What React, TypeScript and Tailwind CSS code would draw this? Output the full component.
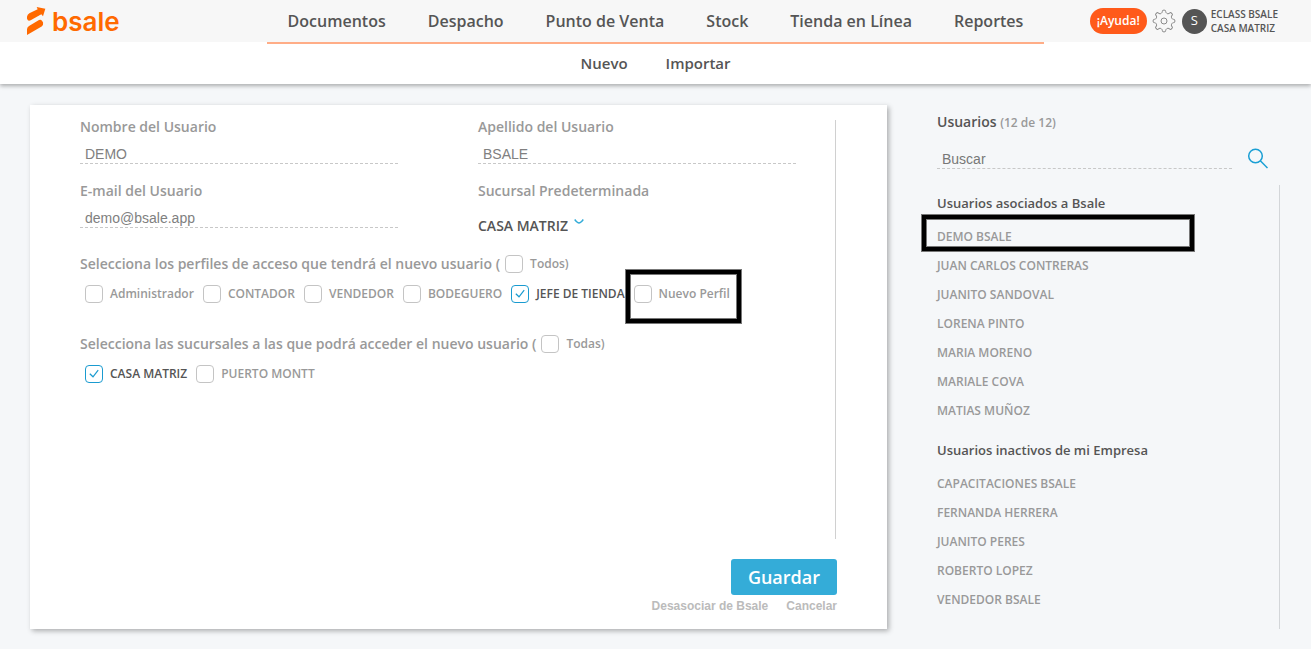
import { useId } from "react";

const menu = ["Documentos", "Despacho", "Punto de Venta", "Stock", "Tienda en Línea", "Reportes"];

const profiles = [
  { name: "Administrador" },
  { name: "CONTADOR" },
  { name: "VENDEDOR" },
  { name: "BODEGUERO" },
  { name: "JEFE DE TIENDA", checked: true },
  { name: "Nuevo Perfil", highlighted: true },
];

const branches = [{ name: "CASA MATRIZ", checked: true }, { name: "PUERTO MONTT" }];

const activeUsers = [
  "DEMO BSALE",
  "JUAN CARLOS CONTRERAS",
  "JUANITO SANDOVAL",
  "LORENA PINTO",
  "MARIA MORENO",
  "MARIALE COVA",
  "MATIAS MUÑOZ",
];

const inactiveUsers = [
  "CAPACITACIONES BSALE",
  "FERNANDA HERRERA",
  "JUANITO PERES",
  "ROBERTO LOPEZ",
  "VENDEDOR BSALE",
];

const Logo = () => (
  <a href="#" className="flex items-center gap-[6px] text-[#ff6900]">
    <svg width="20" height="30" viewBox="78 18 60 90" fill="currentColor" aria-hidden="true">
      <path d="M110 21 L136 26 L129 49 L124 43 L92 61 Q86 64 83 60 Q80 56 81 50 Q82 44 88 40 L113 28 Z" />
      <path d="M81 105 V88 Q81 82 87 78 L117 60 Q122 57 126 62 Q131 67 129 74 Q127 79 121 82 Z" />
    </svg>
    <span className="pt-px font-['Inter',sans-serif] text-[26px] leading-[30px] font-semibold">bsale</span>
  </a>
);

const GearIcon = () => (
  <svg width="24" height="24" viewBox="0 0 24 24" fill="none" stroke="#8a8a8a" aria-hidden="true">
    {[0, 45, 90, 135, 180, 225, 270, 315].map((angle) => (
      <path
        key={angle}
        transform={`rotate(${angle} 12 12)`}
        d="M8.86 4.42 C9.9 4 10.2 3.4 10.3 2.6 Q10.4 1.2 11 1.2 H13 Q13.6 1.2 13.7 2.6 C13.8 3.4 14.1 4 15.14 4.42"
      />
    ))}
    <circle cx="12" cy="12" r="3" />
  </svg>
);

const Header = () => (
  <header className="relative z-10 bg-white shadow-[0_2px_4px_rgba(0,0,0,0.3)]">
    <div className="grid h-[42px] grid-cols-[1fr_auto_1fr] bg-[#f7f7f7]">
      <div className="flex items-center pl-[26px]">
        <Logo />
      </div>
      <nav className="-mb-[2px] flex border-b-2 border-[#ffad87]">
        {menu.map((item) => (
          <a key={item} href="#" className="px-[21px] text-base leading-[42px]">
            {item}
          </a>
        ))}
      </nav>
      <div className="flex items-center justify-end pr-[33px]">
        <button type="button" className="h-[26px] rounded-full bg-[#ff5a1a] px-[7px] text-xs text-white">
          ¡Ayuda!
        </button>
        <button type="button" aria-label="Configuración" className="ml-[5px]">
          <GearIcon />
        </button>
        <span className="ml-[6px] flex size-[25px] items-center justify-center rounded-full bg-[#555] text-[13px] font-normal text-white">
          S
        </span>
        <div className="ml-1 text-[10px] leading-[14px]">
          <div>ECLASS BSALE</div>
          <div>CASA MATRIZ</div>
        </div>
      </div>
    </div>
    <nav className="flex justify-center gap-[38px] text-[15px] leading-[42px]">
      <a href="#">Nuevo</a>
      <a href="#">Importar</a>
    </nav>
  </header>
);

// thick black frame with a thin grey edge on both sides
const Frame = () => (
  <span className="block h-full border border-[#777]">
    <span className="block h-full border-4 border-black">
      <span className="block h-full border border-[#777]" />
    </span>
  </span>
);

type FieldProps = {
  label: string;
  value: string;
  type?: string;
};

const Field = ({ label, value, type = "text" }: FieldProps) => {
  const id = useId();
  return (
    <div>
      <label htmlFor={id} className="block text-sm leading-[14px] text-[#999]">
        {label}
      </label>
      <input
        id={id}
        type={type}
        defaultValue={value}
        className="mt-[10px] block h-5 w-full border-b border-dashed border-[#c8c8c8] px-[5px] font-['Liberation_Sans',Arial,sans-serif] text-sm font-normal text-[#808080] outline-none"
      />
    </div>
  );
};

type CheckProps = {
  name: string;
  checked?: boolean;
  highlighted?: boolean;
};

const Check = ({ name, checked, highlighted }: CheckProps) => (
  <label className="relative flex items-center gap-[7px] text-xs whitespace-nowrap text-[#999] has-checked:text-[#555]">
    <span className="relative flex size-[18px]">
      <input
        type="checkbox"
        defaultChecked={checked}
        className="peer size-[18px] appearance-none rounded-[4px] border border-[#c4c4c4] bg-white checked:border-[#1a9bd0]"
      />
      <svg
        viewBox="0 0 18 18"
        fill="none"
        stroke="#1a9bd0"
        strokeWidth="1.2"
        className="pointer-events-none absolute inset-0 hidden peer-checked:block"
        aria-hidden="true"
      >
        <path d="M4.8 8.8 L8 11.8 L13.2 5.2" />
      </svg>
    </span>
    {name}
    {highlighted && (
      <span className="pointer-events-none absolute -top-4 -right-3 -bottom-[21px] -left-[9px]">
        <Frame />
      </span>
    )}
  </label>
);

type CheckGroupProps = {
  title: string;
  all: string;
  options: CheckProps[];
};

const CheckGroup = ({ title, all, options }: CheckGroupProps) => {
  const id = useId();
  return (
    <div role="group" aria-labelledby={id}>
      <div className="flex h-[30px] items-center gap-[5px] text-sm text-[#999]">
        <span id={id}>{title} (</span>
        <Check name={all} />
      </div>
      <div className="flex h-[30px] items-center gap-[9px] pl-[5px]">
        {options.map((option) => (
          <Check key={option.name} {...option} />
        ))}
      </div>
    </div>
  );
};

const UserForm = () => (
  <form className="flex flex-1 flex-col bg-white px-[50px] pt-[15px] pb-[15px] shadow-[2px_2px_5px_rgba(0,0,0,0.3)]">
    <div className="mr-px flex-1 border-r border-[#d0d0d0]">
      <div className="grid grid-cols-2 gap-x-20 gap-y-5 pr-[39px]">
        <Field label="Nombre del Usuario" value="DEMO" />
        <Field label="Apellido del Usuario" value="BSALE" />
        <Field label="E-mail del Usuario" value="demo@bsale.app" type="email" />
        <div>
          <label htmlFor="sucursal" className="block text-sm leading-[14px] text-[#999]">
            Sucursal Predeterminada
          </label>
          <div className="mt-[18px] flex h-5 gap-[6px]">
            <select id="sucursal" className="field-sizing-content appearance-none text-sm leading-5 outline-none">
              <option>CASA MATRIZ</option>
              <option>PUERTO MONTT</option>
            </select>
            <svg width="10" height="12" viewBox="0 0 10 12" fill="none" stroke="#34acd8" strokeWidth="1.5" aria-hidden="true">
              <path d="M0.7 3.5 Q3.5 7 5 7 Q6.5 7 9.3 3.5" />
            </svg>
          </div>
        </div>
      </div>

      <div className="mt-[13px] flex flex-col gap-5">
        <CheckGroup
          title="Selecciona los perfiles de acceso que tendrá el nuevo usuario"
          all="Todos)"
          options={profiles}
        />
        <CheckGroup
          title="Selecciona las sucursales a las que podrá acceder el nuevo usuario"
          all="Todas)"
          options={branches}
        />
      </div>
    </div>

    <div className="mt-5 flex flex-col items-end">
      <button type="button" className="h-9 rounded-[3px] bg-[#34acd8] px-[17px] text-lg text-white">
        Guardar
      </button>
      <div className="mt-[3px] flex gap-[18px] font-['Liberation_Sans',Arial,sans-serif] text-xs leading-4 font-bold text-[#bbb]">
        <button type="button">Desasociar de Bsale</button>
        <button type="button">Cancelar</button>
      </div>
    </div>
  </form>
);

const UserList = ({ title, users, selected }: { title: string; users: string[]; selected?: string }) => (
  <section>
    <h3 className="text-[13px] leading-[37px]">{title}</h3>
    <ul className="text-xs text-[#999]">
      {users.map((user) => (
        <li key={user} className="relative h-[29px]">
          <button type="button" className="leading-[29px]">
            {user}
          </button>
          {user === selected && (
            <span className="pointer-events-none absolute -top-2 right-[84px] -bottom-px -left-4">
              <Frame />
            </span>
          )}
        </li>
      ))}
    </ul>
  </section>
);

const Sidebar = () => (
  <aside className="flex w-[343px] flex-col">
    <h2 className="mt-[7px] text-sm leading-5">
      Usuarios <span className="text-xs text-[#999]">(12 de 12)</span>
    </h2>
    <div className="mt-4 flex items-start justify-between pr-3">
      <input
        type="search"
        aria-label="Buscar"
        placeholder="Buscar"
        className="mt-px h-5 w-[295px] border-b border-dashed border-[#c8c8c8] px-[5px] font-['Liberation_Sans',Arial,sans-serif] text-sm font-normal outline-none placeholder:text-[#777]"
      />
      <button type="button" aria-label="Buscar usuario">
        <svg width="21" height="21" viewBox="0 0 21 21" fill="none" stroke="#1a9fd4" strokeWidth="1.5" aria-hidden="true">
          <circle cx="8.5" cy="8" r="6.8" />
          <path d="M13.3 12.8 L20.5 20" />
        </svg>
      </button>
    </div>
    <div className="mt-4 flex flex-1 flex-col gap-[7px] border-r border-[#d3d6d9]">
      <UserList title="Usuarios asociados a Bsale" users={activeUsers} selected="DEMO BSALE" />
      <UserList title="Usuarios inactivos de mi Empresa" users={inactiveUsers} />
    </div>
  </aside>
);

export default function App() {
  return (
    <div className="flex min-h-screen flex-col bg-[#f5f7f9] font-['Open_Sans','Noto_Sans',sans-serif] font-semibold text-[#555]">
      <Header />
      <main className="flex flex-1 gap-[50px] pt-[21px] pr-[31px] pb-5 pl-[30px]">
        <UserForm />
        <Sidebar />
      </main>
    </div>
  );
}
